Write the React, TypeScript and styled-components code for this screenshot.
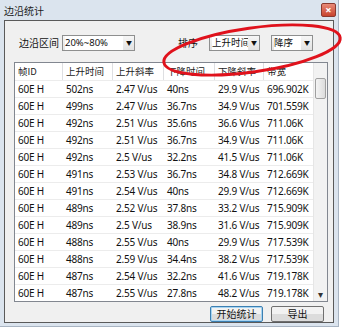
import React from 'react';
import styled, {createGlobalStyle} from 'styled-components';

type Row = {
  frame: string;
  riseTime: string;
  riseSlope: string;
  fallTime: string;
  fallSlope: string;
  bandwidth: string;
};

const rows: Row[] = [
  ['502ns', '2.47 V/us', '40ns', '29.9 V/us', '696.902K'],
  ['499ns', '2.47 V/us', '36.7ns', '34.9 V/us', '701.559K'],
  ['492ns', '2.51 V/us', '35.6ns', '36.6 V/us', '711.06K'],
  ['492ns', '2.51 V/us', '36.7ns', '34.9 V/us', '711.06K'],
  ['492ns', '2.5 V/us', '32.2ns', '41.5 V/us', '711.06K'],
  ['491ns', '2.53 V/us', '36.7ns', '34.8 V/us', '712.669K'],
  ['491ns', '2.54 V/us', '40ns', '29.9 V/us', '712.669K'],
  ['489ns', '2.52 V/us', '37.8ns', '33.2 V/us', '715.909K'],
  ['489ns', '2.5 V/us', '38.9ns', '31.6 V/us', '715.909K'],
  ['488ns', '2.55 V/us', '40ns', '29.9 V/us', '717.539K'],
  ['488ns', '2.59 V/us', '34.4ns', '38.2 V/us', '717.539K'],
  ['487ns', '2.54 V/us', '32.2ns', '41.6 V/us', '719.178K'],
  ['487ns', '2.55 V/us', '27.8ns', '48.2 V/us', '719.178K'],
].map(([riseTime, riseSlope, fallTime, fallSlope, bandwidth]) => ({
  frame: '60E H',
  riseTime,
  riseSlope,
  fallTime,
  fallSlope,
  bandwidth,
}));

const columns = ['帧ID', '上升时间', '上升斜率', '下降时间', '下降斜率', '带宽'];
const colWidths = '48px 50px 51px 51px 49px 50px';

function Select({label, width}: {label: string; width: number}) {
  return (
    <SelectBox $width={width}>
      <SelectText>{label}</SelectText>
      <SelectArrow>▼</SelectArrow>
    </SelectBox>
  );
}

function App() {
  return (
    <>
      <GlobalStyle />
      <Window>
        <TitleBar>
          <Title>边沿统计</Title>
          <CloseButton>×</CloseButton>
        </TitleBar>
        <Body>
          <Controls>
            <Label $gap={3}>边沿区间</Label>
            <Select label="20%~80%" width={73} />
            <Spacer />
            <Label $gap={11}>排序</Label>
            <Select label="上升时间" width={51} />
            <SelectGap />
            <Select label="降序" width={42} />
          </Controls>

          <TableFrame>
            <TableArea>
              <HeaderRow>
                {columns.map((c) => (
                  <HeaderCell key={c}>{c}</HeaderCell>
                ))}
              </HeaderRow>
              {rows.map((r, i) => (
                <DataRow key={i}>
                  <Cell>{r.frame}</Cell>
                  <Cell>{r.riseTime}</Cell>
                  <Cell>{r.riseSlope}</Cell>
                  <Cell>{r.fallTime}</Cell>
                  <Cell>{r.fallSlope}</Cell>
                  <Cell>{r.bandwidth}</Cell>
                </DataRow>
              ))}
            </TableArea>
            <ScrollBar>
              <ScrollHead />
              <ScrollThumb />
              <ScrollDown>▾</ScrollDown>
            </ScrollBar>
          </TableFrame>

          <Buttons>
            <Button $primary>开始统计</Button>
            <Button>导出</Button>
          </Buttons>
        </Body>

        <Annotation viewBox="0 0 344 334" width="344" height="334">
          <ellipse
            cx="252"
            cy="50"
            rx="89"
            ry="22"
            transform="rotate(-8 252 50)"
            fill="none"
            stroke="#e0121c"
            strokeWidth="3"
          />
        </Annotation>
      </Window>
    </>
  );
}

const GlobalStyle = createGlobalStyle`
  body {
    margin: 0;
    background: #ffffff;
    font-family: "Noto Sans", "Noto Sans CJK SC", sans-serif;
  }
`;

const Window = styled.div`
  position: relative;
  width: 339px;
  height: 327px;
  background: #dbe4ee;
  border-right: 1px solid #a8b4c2;
  border-bottom: 1px solid #a8b4c2;
  display: flex;
  flex-direction: column;
  padding: 0 4px 3px 4px;
  box-sizing: border-box;
`;

const TitleBar = styled.div`
  height: 21px;
  display: flex;
  align-items: center;
  justify-content: space-between;
`;

const Title = styled.span`
  font-family: "Noto Sans CJK SC", sans-serif;
  font-size: 10px;
  color: #1a1a1a;
`;

const CloseButton = styled.div`
  width: 13px;
  height: 12px;
  border: 1px solid #8a3a30;
  border-radius: 2px;
  background: linear-gradient(#e88a78, #c8432d);
  color: #fff;
  font-size: 11px;
  font-weight: bold;
  line-height: 11px;
  text-align: center;
  margin-right: -2px;
`;

const Body = styled.div`
  flex: 1;
  background: #f0f0f0;
  border: 1px solid #5a5a5a;
  display: flex;
  flex-direction: column;
  padding: 13px 5px 0 9px;
`;

const Controls = styled.div`
  height: 17px;
  display: flex;
  align-items: center;
  margin-bottom: 11px;
  padding: 0 15px 0 5px;
`;

const Spacer = styled.div`
  flex: 1;
`;

const SelectGap = styled.div`
  width: 11px;
`;

const Label = styled.span<{$gap: number}>`
  font-family: "Noto Sans CJK SC", sans-serif;
  font-size: 10px;
  color: #111;
  margin-right: ${(p) => p.$gap}px;
`;

const SelectBox = styled.div<{$width: number}>`
  width: ${(p) => p.$width}px;
  height: 16px;
  box-sizing: border-box;
  border: 1px solid #8e8f8f;
  background: linear-gradient(#f6f6f6, #e2e2e2);
  display: flex;
  align-items: center;
  padding: 0 2px;
`;

const SelectText = styled.span`
  flex: 1;
  min-width: 0;
  font-family: "Noto Sans", "Noto Sans CJK SC", sans-serif;
  font-size: 9.5px;
  color: #111;
  white-space: nowrap;
  overflow: hidden;
  background: #fff;
  line-height: 14px;
`;

const SelectArrow = styled.span`
  font-size: 6px;
  color: #111;
  margin-left: 3px;
  flex-shrink: 0;
`;

const TableFrame = styled.div`
  height: 238px;
  border: 1px solid #828790;
  background: #fff;
  display: flex;
`;

const TableArea = styled.div`
  flex: 1;
  overflow: hidden;
`;

const HeaderRow = styled.div`
  display: grid;
  grid-template-columns: ${colWidths};
  height: 17px;
`;

const HeaderCell = styled.div`
  font-family: "Noto Sans CJK SC", sans-serif;
  font-size: 9.5px;
  color: #222;
  line-height: 17px;
  padding-left: 3px;
  border-right: 1px solid #dedfe2;
  white-space: nowrap;
`;

const DataRow = styled.div`
  display: grid;
  grid-template-columns: ${colWidths};
  height: 17px;
  border-top: 1px solid #ececec;
  box-sizing: border-box;
`;

const Cell = styled.div`
  font-family: "Noto Sans", sans-serif;
  font-size: 10px;
  letter-spacing: -0.2px;
  color: #111;
  line-height: 16px;
  padding-left: 3px;
  white-space: nowrap;
`;

const ScrollBar = styled.div`
  width: 13px;
  background: #f2f2f2;
  border-left: 1px solid #e6e6e6;
  display: flex;
  flex-direction: column;
`;

const ScrollHead = styled.div`
  height: 15px;
`;

const ScrollThumb = styled.div`
  height: 19px;
  margin: 0 1px;
  border: 1px solid #a0a0a0;
  border-radius: 2px;
  background: linear-gradient(90deg, #f4f4f4, #dcdcdc);
`;

const ScrollDown = styled.div`
  margin-top: auto;
  height: 14px;
  text-align: center;
  font-size: 10px;
  color: #333;
  line-height: 14px;
`;

const Buttons = styled.div`
  display: flex;
  justify-content: flex-end;
  gap: 8px;
  margin-top: 4px;
  padding-right: 4px;
`;

const Button = styled.div<{$primary?: boolean}>`
  width: 53px;
  height: 16px;
  box-sizing: border-box;
  border: 1px solid ${(p) => (p.$primary ? '#3c7fb1' : '#707070')};
  border-radius: 2px;
  background: linear-gradient(#f2f2f2 50%, #dcdcdc 50%);
  box-shadow: ${(p) => (p.$primary ? 'inset 0 0 0 1px #a6d4f2' : 'none')};
  font-family: "Noto Sans CJK SC", sans-serif;
  font-size: 10px;
  color: #111;
  text-align: center;
  line-height: 14px;
`;

const Annotation = styled.svg`
  position: absolute;
  left: 0;
  top: 0;
  pointer-events: none;
`;

export default App;
